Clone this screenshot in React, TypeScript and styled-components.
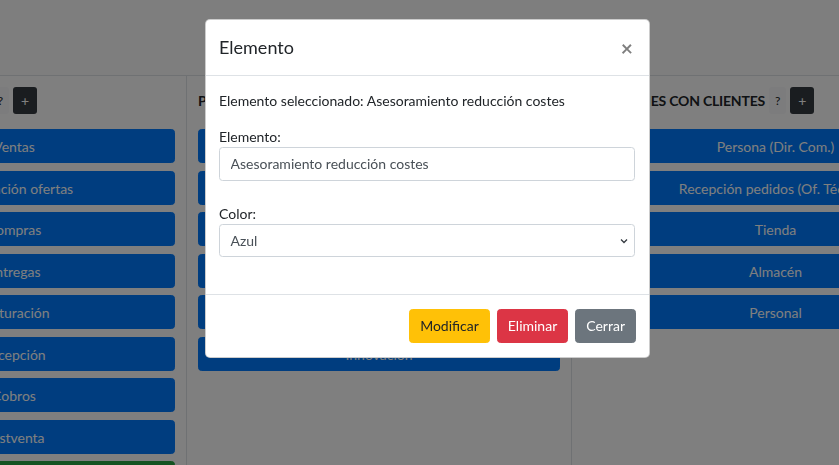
import React from "react";
import styled, { createGlobalStyle } from "styled-components";

const GlobalStyle = createGlobalStyle`
  html {
    font-size: 14px;
  }
  body {
    margin: 0;
    background: #ffffff;
    color: #212529;
    font-family: Lato, "Noto Sans", sans-serif;
    line-height: 1.5;
    overflow: hidden;
  }
  * {
    box-sizing: border-box;
  }
`;

const Page = styled.div`
  position: relative;
  width: 839px;
  height: 465px;
  overflow: hidden;
`;

const TopBar = styled.header`
  height: 76px;
  border-bottom: 1px solid #dee2e6;
  background: #fdfdfd;
`;

const Board = styled.div`
  display: flex;
  margin-left: -158px;
  height: 389px;
`;

const Column = styled.section<{ $width: number }>`
  flex: 0 0 ${(p) => p.$width}px;
  padding: 11px 11px 0;
  border-right: 1px solid #dee2e6;
  display: flex;
  flex-direction: column;
  gap: 7.5px;
`;

const ColumnHeader = styled.div`
  display: flex;
  align-items: center;
  gap: 4px;
  height: 27px;
  margin-bottom: 7.5px;
`;

const ColumnTitle = styled.h6`
  margin: 0;
  font-size: 14px;
  font-weight: 700;
  letter-spacing: -0.2px;
  text-transform: uppercase;
  white-space: nowrap;
`;

const HelpButton = styled.button`
  height: 27px;
  padding: 0 6px;
  border: 0;
  border-radius: 3px;
  background: #f8f9fa;
  color: #212529;
  font: inherit;
  font-size: 12px;
`;

const AddButton = styled.button`
  width: 24px;
  height: 27px;
  padding: 0;
  border: 0;
  border-radius: 3px;
  background: #343a40;
  color: #ffffff;
  font: inherit;
  font-size: 14px;
`;

const ItemButton = styled.button<{ $variant?: "primary" | "success" }>`
  display: block;
  width: 100%;
  height: 34px;
  flex: 0 0 34px;
  padding: 1px 8px 0;
  border: 1px solid ${(p) => (p.$variant === "success" ? "#28a745" : "#007bff")};
  border-radius: 3.5px;
  background: ${(p) => (p.$variant === "success" ? "#28a745" : "#007bff")};
  color: #ffffff;
  font: inherit;
  font-size: 14px;
  white-space: nowrap;
  overflow: hidden;
`;

const Backdrop = styled.div`
  position: fixed;
  inset: 0;
  background: rgba(0, 0, 0, 0.5);
`;

const Dialog = styled.div`
  position: fixed;
  top: 19px;
  left: 205px;
  width: 445px;
  background: #ffffff;
  border: 1px solid rgba(0, 0, 0, 0.2);
  border-radius: 5px;
`;

const DialogHeader = styled.div`
  display: flex;
  align-items: center;
  justify-content: space-between;
  padding: 14px 14px 14px 13px;
  border-bottom: 1px solid #dee2e6;
`;

const DialogTitle = styled.h5`
  margin: 0;
  font-size: 18px;
  font-weight: 400;
  line-height: 27px;
`;

const CloseButton = styled.button`
  padding: 0 2px 0 0;
  border: 0;
  background: transparent;
  color: #000000;
  opacity: 0.5;
  font: inherit;
  font-size: 21px;
  font-weight: 700;
  line-height: 1;
`;

const DialogBody = styled.div`
  padding: 14px 14px 14px 13px;
`;

const Paragraph = styled.p`
  margin: 0 0 15px;
`;

const Label = styled.label`
  display: block;
  margin: 0;
`;

const FieldGroup = styled.div<{ $after: number }>`
  margin-bottom: ${(p) => p.$after}px;
`;

const TextInput = styled.input`
  display: block;
  width: 100%;
  height: 33.5px;
  padding: 5px 10.5px;
  border: 1px solid #ced4da;
  border-radius: 3.5px;
  color: #495057;
  font: inherit;
  font-size: 14px;
`;

const SelectBox = styled.div`
  position: relative;
  height: 33.5px;
  border: 1px solid #ced4da;
  border-radius: 3.5px;
  display: flex;
  align-items: center;
  padding: 0 10.5px;
  color: #495057;

  svg {
    position: absolute;
    right: 6px;
    top: 13px;
  }
`;

const DialogFooter = styled.div`
  display: flex;
  justify-content: flex-end;
  gap: 7px;
  padding: 14px 13px 14px 14px;
  border-top: 1px solid #dee2e6;
`;

const FooterButton = styled.button<{ $bg: string; $fg: string }>`
  height: 33.5px;
  padding: 0 10px;
  border: 1px solid ${(p) => p.$bg};
  border-radius: 3.5px;
  background: ${(p) => p.$bg};
  color: ${(p) => p.$fg};
  font: inherit;
  font-size: 14px;
`;

type Col = {
  title: string;
  width: number;
  items: { label: string; variant?: "primary" | "success" }[];
};

const columns: Col[] = [
  {
    title: "Actividades clave",
    width: 345,
    items: [
      { label: "Ventas" },
      { label: "Elaboración ofertas" },
      { label: "Compras" },
      { label: "Entregas" },
      { label: "Facturación" },
      { label: "Recepción" },
      { label: "Cobros" },
      { label: "Postventa" },
      { label: "Marketing", variant: "success" },
    ],
  },
  {
    title: "Propuesta de valor",
    width: 385,
    items: [
      { label: "Asesoramiento reducción costes" },
      { label: "Calidad" },
      { label: "Rapidez entrega" },
      { label: "Servicio técnico" },
      { label: "Precio" },
      { label: "Innovación" },
    ],
  },
  {
    title: "Relaciones con clientes",
    width: 408,
    items: [
      { label: "Persona (Dir. Com.)" },
      { label: "Recepción pedidos (Of. Técnica)" },
      { label: "Tienda" },
      { label: "Almacén" },
      { label: "Personal" },
    ],
  },
];

export default function App() {
  return (
    <>
      <GlobalStyle />
      <Page>
        <TopBar />
        <Board>
          {columns.map((col) => (
            <Column key={col.title} $width={col.width}>
              <ColumnHeader>
                <ColumnTitle>{col.title}</ColumnTitle>
                <HelpButton>?</HelpButton>
                <AddButton>+</AddButton>
              </ColumnHeader>
              {col.items.map((item) => (
                <ItemButton key={item.label} $variant={item.variant}>
                  {item.label}
                </ItemButton>
              ))}
            </Column>
          ))}
        </Board>
        <Backdrop />
        <Dialog>
          <DialogHeader>
            <DialogTitle>Elemento</DialogTitle>
            <CloseButton>×</CloseButton>
          </DialogHeader>
          <DialogBody>
            <Paragraph>Elemento seleccionado: Asesoramiento reducción costes</Paragraph>
            <FieldGroup $after={22}>
              <Label>Elemento:</Label>
              <TextInput defaultValue="Asesoramiento reducción costes" />
            </FieldGroup>
            <FieldGroup $after={23}>
              <Label>Color:</Label>
              <SelectBox>
                Azul
                <svg width="8" height="6" viewBox="0 0 8 6">
                  <path d="M1 1.5 L4 4.5 L7 1.5" fill="none" stroke="#343a40" strokeWidth="1.3" />
                </svg>
              </SelectBox>
            </FieldGroup>
          </DialogBody>
          <DialogFooter>
            <FooterButton $bg="#ffc107" $fg="#212529">Modificar</FooterButton>
            <FooterButton $bg="#dc3545" $fg="#ffffff">Eliminar</FooterButton>
            <FooterButton $bg="#6c757d" $fg="#ffffff">Cerrar</FooterButton>
          </DialogFooter>
        </Dialog>
      </Page>
    </>
  );
}
